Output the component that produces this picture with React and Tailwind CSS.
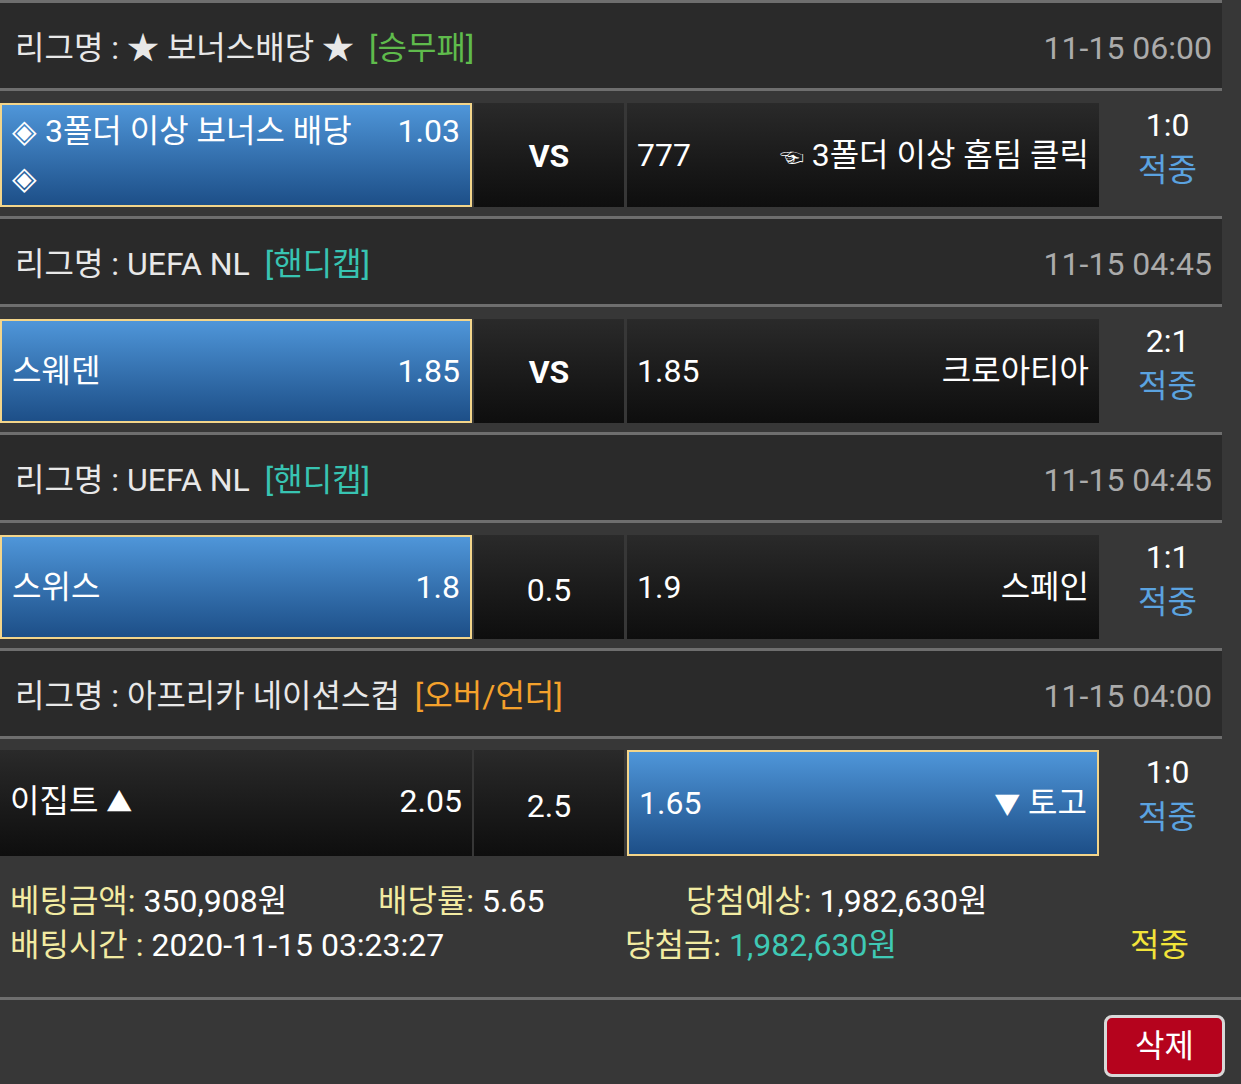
const matches = [
  {
    league: '★ 보너스배당 ★',
    type: '[승무패]',
    typeClass: 'text-[#5fbb4c]',
    time: '11-15 06:00',
    home: '◈ 3폴더 이상 보너스 배당 ◈',
    homeOdds: '1.03',
    mid: 'VS',
    away: (
      <>
        <span className="mr-[8px] text-[24px] align-middle">☜</span>3폴더 이상 홈팀 클릭
      </>
    ),
    awayOdds: '777',
    score: '1:0',
    pick: 'home',
  },
  {
    league: 'UEFA NL',
    type: '[핸디캡]',
    typeClass: 'text-[#38c4b2]',
    time: '11-15 04:45',
    home: '스웨덴',
    homeOdds: '1.85',
    mid: 'VS',
    away: '크로아티아',
    awayOdds: '1.85',
    score: '2:1',
    pick: 'home',
  },
  {
    league: 'UEFA NL',
    type: '[핸디캡]',
    typeClass: 'text-[#38c4b2]',
    time: '11-15 04:45',
    home: '스위스',
    homeOdds: '1.8',
    mid: '0.5',
    away: '스페인',
    awayOdds: '1.9',
    score: '1:1',
    pick: 'home',
  },
  {
    league: '아프리카 네이션스컵',
    type: '[오버/언더]',
    typeClass: 'text-[#f4a12c]',
    time: '11-15 04:00',
    home: (
      <>
        이집트 <span className="text-[26px] align-middle">▲</span>
      </>
    ),
    homeOdds: '2.05',
    mid: '2.5',
    away: (
      <>
        <span className="text-[26px] align-middle">▼</span> 토고
      </>
    ),
    awayOdds: '1.65',
    score: '1:0',
    pick: 'away',
  },
];

const blueCell =
  'border-2 border-[#f3d58a] bg-gradient-to-b from-[#4f96d9] to-[#1d4f88]';
const darkCell = 'bg-gradient-to-b from-[#2a2a2a] to-[#0e0e0e]';

const Line = () => <div className="h-[3px] bg-[#6e6e6e]" />;

const MatchBlock = ({ m, last }) => (
  <>
    <div className="h-[85px] bg-[#2a2a2a] flex items-center justify-between pl-[15px] pr-[10px] pt-[5px]">
      <div className="text-[#e8e8e8]">
        리그명 : {m.league}
        <span className={`ml-[15px] ${m.typeClass}`}>{m.type}</span>
      </div>
      <div className="text-[#ababab]">{m.time}</div>
    </div>
    <Line />
    <div className={`flex gap-[2px] ${last ? 'pt-[11px]' : 'pt-[12px] pb-[9px]'}`}>
      <div
        className={`w-[472px] ${last ? 'h-[106px]' : 'h-[104px]'} flex items-center pl-[10px] pr-[10px] text-white ${
          m.pick === 'home' ? blueCell : darkCell
        }`}
      >
        <div className="w-full flex justify-between items-start leading-[47px]">
          <span className="w-[350px]">{m.home}</span>
          <span>{m.homeOdds}</span>
        </div>
      </div>
      <div
        className={`w-[150px] ${last ? 'h-[106px]' : 'h-[104px]'} flex items-center justify-center text-white ${darkCell} ${
          m.mid === 'VS' ? 'font-bold pt-[2px]' : 'pt-[6px]'
        }`}
      >
        {m.mid}
      </div>
      <div
        className={`w-[472px] ml-[1px] ${last ? 'h-[106px]' : 'h-[104px]'} flex items-center justify-between pl-[10px] pr-[10px] text-white ${
          m.pick === 'away' ? blueCell : darkCell
        }`}
      >
        <span>{m.awayOdds}</span>
        <span>{m.away}</span>
      </div>
      <div className="flex-1 flex flex-col items-center pl-[12px] leading-[45px]">
        <span className="text-white">{m.score}</span>
        <span className="text-[#5ba3e0]">적중</span>
      </div>
    </div>
    {!last && <Line />}
  </>
);

export default function App() {
  return (
    <div className="w-[1241px] h-[1084px] overflow-hidden bg-[#373737] text-[32px] font-[Roboto,'Noto_Sans_CJK_KR',sans-serif]">
      <div className="w-[1222px]">
        <Line />
        {matches.map((m, i) => (
          <MatchBlock key={i} m={m} last={i === matches.length - 1} />
        ))}
      </div>
      <div className="h-[141px] pt-[23px] pl-[10px] leading-[44px]">
        <div className="flex">
          <span className="w-[368px]">
            <span className="text-[#f2eba2]">베팅금액:</span>{' '}
            <span className="text-white">350,908원</span>
          </span>
          <span className="w-[308px]">
            <span className="text-[#f2eba2]">배당률:</span>{' '}
            <span className="text-white">5.65</span>
          </span>
          <span>
            <span className="text-[#f2eba2]">당첨예상:</span>{' '}
            <span className="text-white">1,982,630원</span>
          </span>
        </div>
        <div className="flex">
          <span className="w-[615px]">
            <span className="text-[#f2eba2]">배팅시간 :</span>{' '}
            <span className="text-white">2020-11-15 03:23:27</span>
          </span>
          <span className="w-[505px]">
            <span className="text-[#f2eba2]">당첨금:</span>{' '}
            <span className="text-[#3fc9b5]">1,982,630원</span>
          </span>
          <span className="text-[#f2e43a]">적중</span>
        </div>
      </div>
      <div className="h-[3px] bg-[#6e6e6e]" />
      <div className="flex justify-end pt-[15px] pr-[16px]">
        <button className="w-[121px] h-[62px] rounded-[8px] border-[3px] border-[#d8d8d8] bg-[#b5031d] text-white text-[32px] leading-none">
          삭제
        </button>
      </div>
    </div>
  );
}
